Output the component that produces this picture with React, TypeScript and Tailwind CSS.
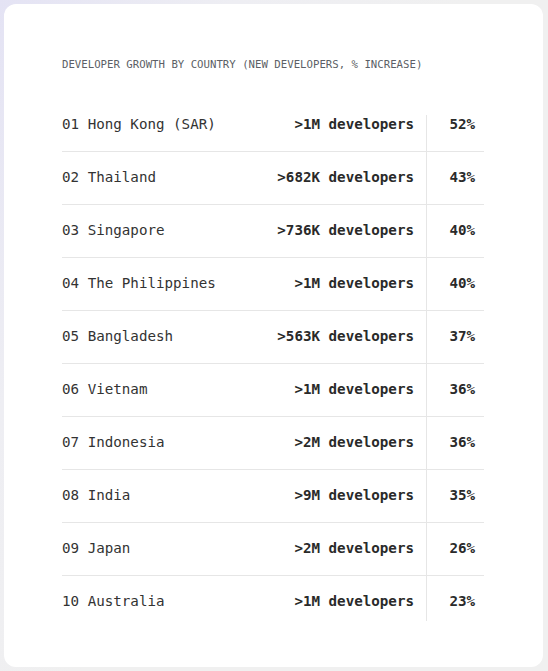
import React from "react";

const rows = [
  ["01", "Hong Kong (SAR)", ">1M", "52%"],
  ["02", "Thailand", ">682K", "43%"],
  ["03", "Singapore", ">736K", "40%"],
  ["04", "The Philippines", ">1M", "40%"],
  ["05", "Bangladesh", ">563K", "37%"],
  ["06", "Vietnam", ">1M", "36%"],
  ["07", "Indonesia", ">2M", "36%"],
  ["08", "India", ">9M", "35%"],
  ["09", "Japan", ">2M", "26%"],
  ["10", "Australia", ">1M", "23%"],
];

export default function App() {
  return (
    <div
      className="w-[548px] h-[671px] p-[4px] bg-[linear-gradient(120deg,#e4e3f4_0%,#eeeef3_25%,#f0f0f0_50%,#f0f0f0_100%)]"
      style={{ fontFamily: '"DejaVu Sans Mono", "Liberation Mono", monospace' }}
    >
      <div className="h-[663px] w-[539px] bg-white rounded-[12px] pl-[58px] pr-[59px] pt-[53px]">
        <div className="text-[10.7px] leading-[16px] text-[#5c5f66] tracking-[0px]">
          DEVELOPER GROWTH BY COUNTRY (NEW DEVELOPERS, % INCREASE)
        </div>
        <div className="mt-[42px] flex flex-col">
          {rows.map((r, i) => {
            const first = i === 0;
            const last = i === rows.length - 1;
            const pt = first ? "pt-0" : "pt-[16px]";
            const pb = last ? "pb-[11px]" : "pb-[18px]";
            return (
              <div
                key={r[0]}
                className={
                  "grid grid-cols-[1fr_auto_58px] text-[14.2px] leading-[18px] " +
                  (first ? "" : "border-t border-[#e6e6e6]")
                }
              >
                <div className={`${pt} ${pb} text-[#333333]`}>
                  {r[0]} {r[1]}
                </div>
                <div className={`${pt} ${pb} pr-[12px] text-right font-bold text-[#2a2a2a]`}>
                  {r[2]} developers
                </div>
                <div
                  className={`${pt} ${pb} pr-[9px] text-right font-bold text-[#2a2a2a] border-l border-[#e6e6e6]`}
                >
                  {r[3]}
                </div>
              </div>
            );
          })}
        </div>
      </div>
    </div>
  );
}
